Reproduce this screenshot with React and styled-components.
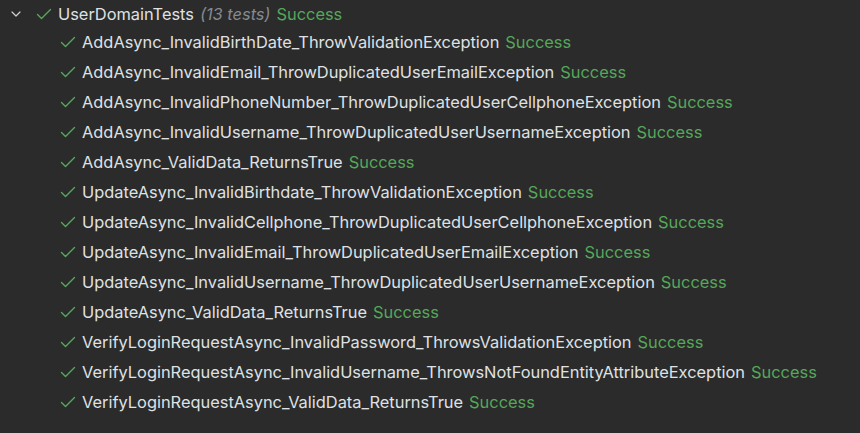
import React from "react";
import styled, { createGlobalStyle } from "styled-components";

const GlobalStyle = createGlobalStyle`
  html, body {
    margin: 0;
    padding: 0;
    background: #2b2b2b;
  }
  body {
    font-family: Inter, "Noto Sans", sans-serif;
  }
`;

const tests = [
  "AddAsync_InvalidBirthDate_ThrowValidationException",
  "AddAsync_InvalidEmail_ThrowDuplicatedUserEmailException",
  "AddAsync_InvalidPhoneNumber_ThrowDuplicatedUserCellphoneException",
  "AddAsync_InvalidUsername_ThrowDuplicatedUserUsernameException",
  "AddAsync_ValidData_ReturnsTrue",
  "UpdateAsync_InvalidBirthdate_ThrowValidationException",
  "UpdateAsync_InvalidCellphone_ThrowDuplicatedUserCellphoneException",
  "UpdateAsync_InvalidEmail_ThrowDuplicatedUserEmailException",
  "UpdateAsync_InvalidUsername_ThrowDuplicatedUserUsernameException",
  "UpdateAsync_ValidData_ReturnsTrue",
  "VerifyLoginRequestAsync_InvalidPassword_ThrowsValidationException",
  "VerifyLoginRequestAsync_InvalidUsername_ThrowsNotFoundEntityAttributeException",
  "VerifyLoginRequestAsync_ValidData_ReturnsTrue",
];

const Check = () => (
  <svg width="16" height="16" viewBox="0 0 16 16" fill="none">
    <path d="M1.5 8.5 L5.5 12.5 L14.5 3.5" stroke="#55a85a" strokeWidth="1.4" strokeLinecap="round" strokeLinejoin="round" />
  </svg>
);

const Chevron = () => (
  <svg width="16" height="16" viewBox="0 0 16 16" fill="none">
    <path d="M4 6 L8 10 L12 6" stroke="#ced0d6" strokeWidth="1.2" strokeLinecap="round" strokeLinejoin="round" />
  </svg>
);

export default function App() {
  return (
    <>
      <GlobalStyle />
      <Tree>
        <Row $indent={8}>
          <IconSlot><Chevron /></IconSlot>
          <IconSlot $gap={6}><Check /></IconSlot>
          <Name>UserDomainTests</Name>
          <Count>(13 tests)</Count>
          <Status>Success</Status>
        </Row>
        {tests.map((t) => (
          <Row key={t} $indent={60}>
            <IconSlot><Check /></IconSlot>
            <Name>{t}</Name>
            <Status>Success</Status>
          </Row>
        ))}
      </Tree>
    </>
  );
}

const Tree = styled.div`
  display: flex;
  flex-direction: column;
  width: 860px;
  height: 433px;
  background: #2b2b2b;
`;

const Row = styled.div`
  display: flex;
  align-items: center;
  height: 30px;
  padding-left: ${(p) => p.$indent}px;
  font-size: 16.4px;
  white-space: nowrap;
  &:first-child {
    height: 27px;
  }
`;

const IconSlot = styled.span`
  display: inline-flex;
  width: 16px;
  height: 16px;
  margin-left: ${(p) => p.$gap || 0}px;
  margin-right: 6px;
`;

const Name = styled.span`
  color: #dfe1e5;
`;

const Count = styled.span`
  color: #868a91;
  font-style: italic;
  margin-left: 6px;
`;

const Status = styled.span`
  color: #55a85a;
  margin-left: 6px;
`;
